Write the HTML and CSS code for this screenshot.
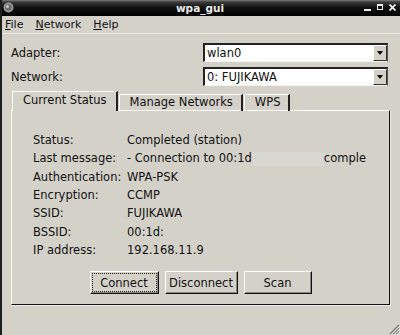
FILE: index.html
```html
<!DOCTYPE html>
<html>
<head>
<meta charset="utf-8">
<title>wpa_gui</title>
<link rel="stylesheet" href="styles.css">
</head>
<body>
<div class="win">
  <div class="titlebar">
    <svg class="appicon" width="11" height="11" viewBox="0 0 11 11"><circle cx="5.5" cy="5.5" r="5" fill="#9a9a9a"/><circle cx="5.5" cy="5.5" r="3.2" fill="#6c6c6c"/><circle cx="4.5" cy="4.5" r="1.5" fill="#c8c8c8"/></svg>
    <div class="title">wpa_gui</div>
    <div class="controls">
      <svg width="7" height="7" viewBox="0 0 7 7"><rect x="0" y="5" width="7" height="2" fill="#eee"/></svg>
      <svg width="6" height="6" viewBox="0 0 6 6"><rect x="0.5" y="0.5" width="5" height="5" fill="none" stroke="#eee" stroke-width="1"/><rect x="0" y="0" width="6" height="2" fill="#eee"/></svg>
      <svg width="7" height="7" viewBox="0 0 7 7"><path d="M0.5 0.5L6.5 6.5M6.5 0.5L0.5 6.5" stroke="#eee" stroke-width="1.8"/></svg>
    </div>
  </div>
  <div class="menubar">
    <span class="menu"><u>F</u>ile</span>
    <span class="menu"><u>N</u>etwork</span>
    <span class="menu"><u>H</u>elp</span>
  </div>
  <div class="content">
    <div class="form">
      <div class="lbl">Adapter:</div>
      <div class="combo"><span class="ctext">wlan0</span><span class="carrow"></span></div>
      <div class="lbl">Network:</div>
      <div class="combo"><span class="ctext">0: FUJIKAWA</span><span class="carrow"></span></div>
    </div>
    <div class="tabbar">
      <div class="tab sel">Current Status</div>
      <div class="tab">Manage Networks</div>
      <div class="tab">WPS</div>
    </div>
    <div class="panel">
      <div class="status">
        <div>Status:</div><div>Completed (station)</div>
        <div>Last message:</div><div class="nowrap">- Connection to 00:1d<span class="redact"></span>comple</div>
        <div>Authentication:</div><div>WPA-PSK</div>
        <div>Encryption:</div><div>CCMP</div>
        <div>SSID:</div><div>FUJIKAWA</div>
        <div>BSSID:</div><div>00:1d:</div>
        <div>IP address:</div><div>192.168.11.9</div>
      </div>
      <div class="buttons">
        <div class="btn focus b1">Connect</div>
        <div class="btn b2">Disconnect</div>
        <div class="btn b3">Scan</div>
      </div>
    </div>
    <div class="footer">
      <svg width="12" height="12" viewBox="0 0 12 12"><path d="M11 2L2 11M11 5L5 11M11 8L8 11" stroke="#777" stroke-width="1.2"/><path d="M12 3L3 12M12 6L6 12M12 9L9 12" stroke="#fff" stroke-width="0.8"/></svg>
    </div>
  </div>
</div>
</body>
</html>
```

FILE: styles.css
```css
html, body {
  margin: 0;
  padding: 0;
  background: #d4d1c9;
}
.win {
  width: 398px;
  height: 335px;
  border-left: 2px solid #1e1e1e;
  background: #d4d1c9;
  display: flex;
  flex-direction: column;
  font-family: "DejaVu Sans", sans-serif;
  font-size: 11.5px;
  color: #111;
  overflow: hidden;
}
.titlebar {
  height: 16px;
  background: linear-gradient(#7c7c7c 0, #3c3c3c 2px, #141414 7px, #000 16px);
  display: flex;
  align-items: center;
  padding: 0 3px 0 1px;
}
.appicon {
  flex: none;
  margin-top: -1px;
}
.title {
  flex: 1;
  text-align: center;
  color: #e8e8e8;
  font-weight: bold;
  font-size: 10.5px;
  padding-left: 22px;
}
.controls {
  display: flex;
  align-items: center;
  gap: 6px;
  padding-right: 1px;
  margin-top: -2px;
}
.menubar {
  height: 17px;
  display: flex;
  align-items: center;
  border-bottom: 1px solid #ebe9e4;
  font-size: 11px;
  padding-left: 3px;
}
.menu {
  margin-right: 12px;
}
.content {
  flex: 1;
  display: flex;
  flex-direction: column;
  padding: 9px 8px 0 9px;
}
.form {
  display: grid;
  grid-template-columns: 192px 185px;
  grid-auto-rows: 19px;
  row-gap: 5px;
  align-items: center;
}
.combo {
  height: 19px;
  box-sizing: border-box;
  background: #fff;
  border-top: 2px solid #222;
  border-left: 2px solid #222;
  border-right: 1px solid #555;
  border-bottom: 1px solid #f4f4f4;
  display: flex;
  align-items: stretch;
}
.ctext {
  flex: 1;
  padding-left: 2px;
  line-height: 16px;
}
.carrow {
  width: 14px;
  background: #d4d1c9;
  border-top: 1px solid #fff;
  border-left: 1px solid #fff;
  border-right: 1px solid #333;
  border-bottom: 1px solid #333;
  box-sizing: border-box;
  position: relative;
}
.carrow::after {
  content: "";
  position: absolute;
  left: 3px;
  top: 5px;
  border-left: 3.5px solid transparent;
  border-right: 3.5px solid transparent;
  border-top: 4px solid #000;
}
.tabbar {
  margin-top: 5px;
  display: flex;
  align-items: flex-end;
  height: 20px;
  padding-left: 1px;
  position: relative;
  z-index: 2;
  margin-bottom: -1px;
}
.tab {
  height: 16px;
  line-height: 15px;
  padding: 0 8px 0 10px;
  border-top: 1px solid #fff;
  border-left: 1px solid #fff;
  border-right: 2px solid #222;
  margin-right: 1px;
  white-space: nowrap;
  box-sizing: content-box;
}
.tab.sel {
  height: 19px;
  line-height: 17px;
  padding-right: 9px;
  background: #d4d1c9;
}
.panel {
  width: 379px;
  box-sizing: border-box;
  border-top: 1px solid #fff;
  border-left: 1px solid #fff;
  border-right: 1px solid #111;
  border-bottom: 1px solid #111;
  box-shadow: 1px 1px 0 #ecebe6;
  padding: 20px 0 10px 21px;
  display: flex;
  flex-direction: column;
}
.status {
  display: grid;
  grid-template-columns: 94px 1fr;
  grid-auto-rows: 18.3px;
  align-items: center;
}
.nowrap {
  white-space: nowrap;
}
.redact {
  display: inline-block;
  width: 72px;
  height: 14px;
  vertical-align: middle;
  background: #d9d7d1;
}
.buttons {
  margin-top: 12px;
  display: flex;
  justify-content: center;
  gap: 6px;
  margin-left: -21px;
}
.btn {
  height: 23px;
  box-sizing: border-box;
  border-top: 1px solid #fff;
  border-left: 1px solid #fff;
  border-right: 1px solid #111;
  border-bottom: 1px solid #111;
  box-shadow: inset -1px -1px 0 #8a8883;
  display: flex;
  align-items: center;
  justify-content: center;
}
.b1 { width: 69px; }
.b2 { width: 73px; }
.b3 { width: 68px; }
.focus {
  outline: 1px dotted #222;
  outline-offset: -3px;
}
.footer {
  flex: 1;
  display: flex;
  justify-content: flex-end;
  align-items: flex-end;
  margin-right: -8px;
}
```
